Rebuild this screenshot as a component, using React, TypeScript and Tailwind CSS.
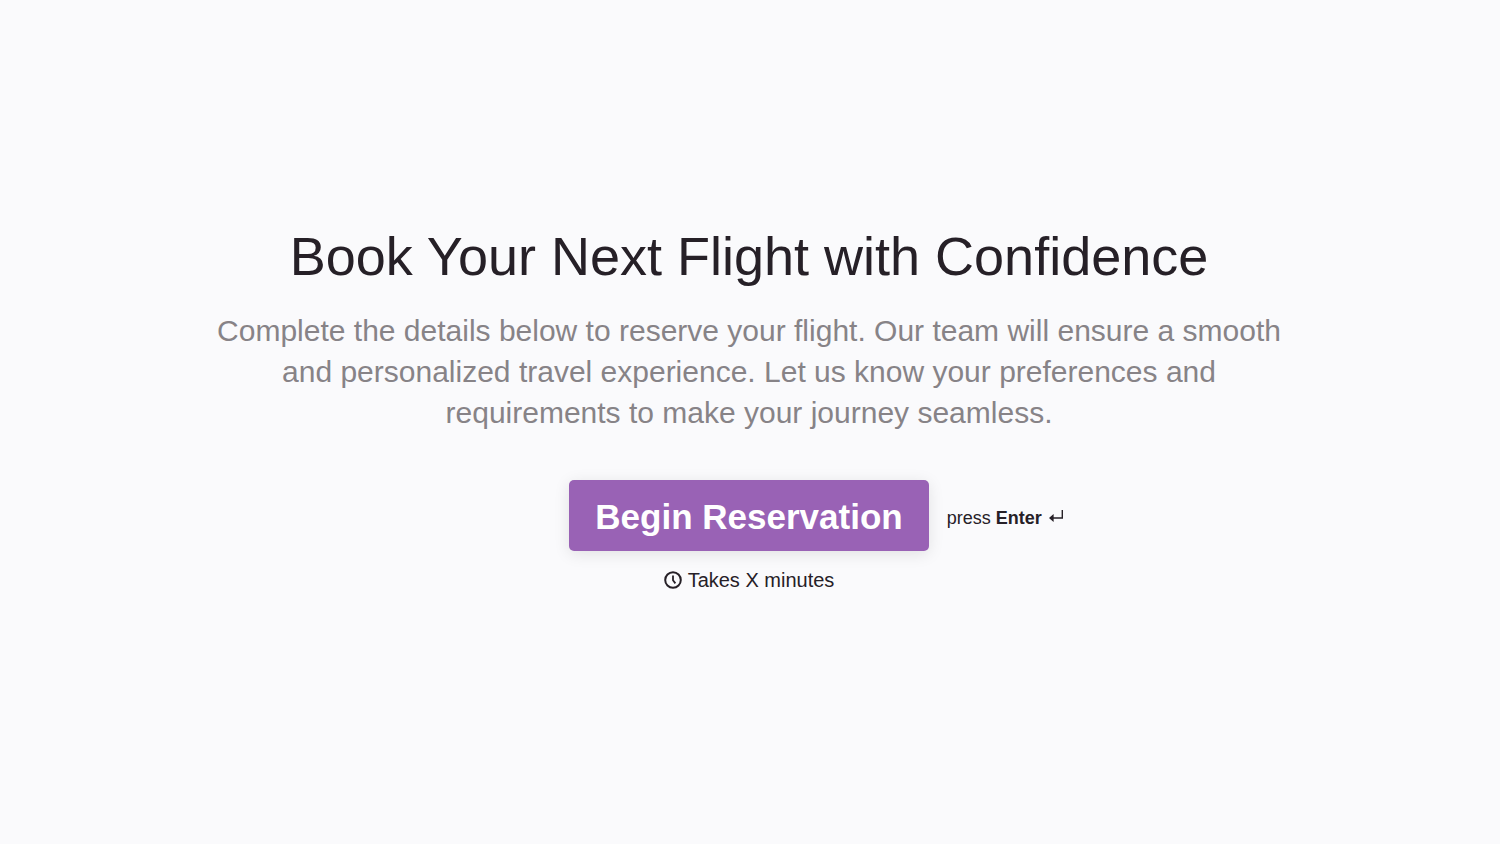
export default function App() {
  return (
    <main className="flex min-h-screen flex-col items-center justify-center bg-[#fafafc] pr-[26px] pb-8 pl-6 text-center font-['Liberation_Sans',Arial,sans-serif] text-[#262027]">
      <h1 className="text-[54px] leading-[76px]">Book Your Next Flight with Confidence</h1>
      <p className="mt-4 max-w-[1080px] text-[30px] leading-[41px] text-[#878387]">
        Complete the details below to reserve your flight. Our team will ensure a smooth and personalized travel
        experience. Let us know your preferences and requirements to make your journey seamless.
      </p>
      <div className="mt-[47px] grid w-full grid-cols-[1fr_auto_1fr] items-center gap-[18px]">
        <button
          type="button"
          className="col-start-2 h-[71px] rounded-[5px] bg-[#9962b5] px-[26px] pt-0.5 text-[35px] leading-[48px] font-bold text-white shadow-[0_3px_16px_rgba(0,0,0,0.1)]"
        >
          Begin Reservation
        </button>
        <div className="flex items-center gap-[7px] pt-1 text-[18px] leading-6">
          <span>
            press <strong>Enter</strong>
          </span>
          <svg className="mb-1 h-3 w-[14px]" viewBox="0 0 14 12" fill="none" aria-hidden="true">
            <path d="M13.3 0v8H3" stroke="currentColor" strokeWidth="1.4" />
            <path d="M0 8 4.6 4v8Z" fill="currentColor" />
          </svg>
        </div>
      </div>
      <div className="mt-[15px] flex items-center gap-[6px] text-[20px] leading-7">
        <svg className="size-[18px]" viewBox="0 0 18 18" fill="none" stroke="currentColor" strokeWidth="2" aria-hidden="true">
          <circle cx="9" cy="9" r="7.8" />
          <path d="M9 4.4v4.8l2.4 3.2" strokeWidth="1.8" />
        </svg>
        <span>Takes X minutes</span>
      </div>
    </main>
  );
}
